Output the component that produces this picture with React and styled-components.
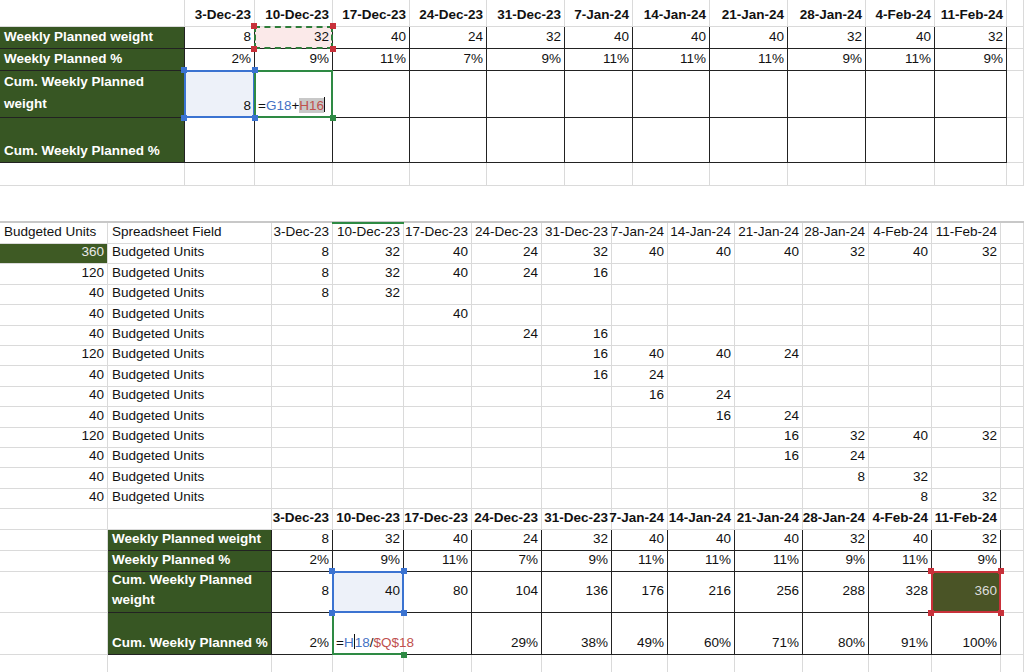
import React from "react";
import styled, { createGlobalStyle } from "styled-components";

const G = createGlobalStyle`
  body { margin: 0; background: #fff; font-family: "Liberation Sans", Arial, sans-serif; }
  #root { width: 1024px; height: 672px; overflow: hidden; }
`;

const Grid = styled.div`
  display: grid;
  grid-template-columns: ${(p) => p.$cols};
  grid-auto-rows: auto;
`;

const Cell = styled.div`
  position: relative;
  box-sizing: border-box;
  height: ${(p) => p.$h}px;
  border-right: 1px solid ${(p) => (p.$b ? "#222" : "#dadada")};
  border-bottom: 1px solid ${(p) => (p.$b ? "#222" : "#dadada")};
  background: ${(p) => p.$bg || "transparent"};
  color: ${(p) => p.$fg || "#111"};
  font-size: 13.5px;
  font-weight: ${(p) => (p.$bold ? 700 : 400)};
  display: flex;
  align-items: ${(p) => (p.$top ? "center" : "flex-end")};
  justify-content: ${(p) => (p.$left ? "flex-start" : "flex-end")};
  padding: 0 3px 2px 4px;
  line-height: 18px;
  white-space: nowrap;
  overflow: visible;
`;

const Label = styled.span`
  text-align: left;
  line-height: ${(p) => p.$lh || 22}px;
  white-space: pre-wrap;
`;

const Sel = styled.div`
  position: absolute;
  inset: -1px;
  border: 2px ${(p) => p.$style || "solid"} ${(p) => p.$c};
  pointer-events: none;
  z-index: 2;
`;
const Handle = styled.div`
  position: absolute;
  width: 6px;
  height: 6px;
  background: ${(p) => p.$c};
  z-index: 3;
  ${(p) => p.$pos}
`;
const Formula = styled.span`
  position: absolute;
  left: 3px;
  bottom: 2px;
  z-index: 3;
  white-space: nowrap;
`;
const Ref = styled.span`
  color: ${(p) => p.$c};
  background: ${(p) => p.$hl || "transparent"};
`;
const Caret = styled.span`
  display: inline-block;
  width: 1px;
  height: 15px;
  background: #111;
  vertical-align: -2px;
`;
const Spacer = styled.div`
  height: 35px;
  border-bottom: 2px solid #c8c8c8;
`;

const corners = (c) => (
  <>
    <Handle $c={c} $pos="left:-4px;top:-4px;" />
    <Handle $c={c} $pos="right:-4px;top:-4px;" />
    <Handle $c={c} $pos="left:-4px;bottom:-4px;" />
    <Handle $c={c} $pos="right:-4px;bottom:-4px;" />
  </>
);

const dates = ["3-Dec-23","10-Dec-23","17-Dec-23","24-Dec-23","31-Dec-23","7-Jan-24","14-Jan-24","21-Jan-24","28-Jan-24","4-Feb-24","11-Feb-24"];
const weekly = [8,32,40,24,32,40,40,40,32,40,32];
const pct = ["2%","9%","11%","7%","9%","11%","11%","11%","9%","11%","9%"];
const cum = [8,40,80,104,136,176,216,256,288,328,360];
const cumPct = ["2%","","","29%","38%","49%","60%","71%","80%","91%","100%"];
const GREEN = "#375623";

const topCols = "185px 70px 78px 77px 77px 78px 68px 77px 78px 78px 69px 72px 1fr";
const botCols = "108px 164px 61px 71px 68px 70px 70px 56px 67px 68px 66px 63px 69px 1fr";

const midRows = [
  [360, [8,32,40,24,32,40,40,40,32,40,32]],
  [120, [8,32,40,24,16]],
  [40, [8,32]],
  [40, [, ,40]],
  [40, [, , ,24,16]],
  [120, [, , , ,16,40,40,24]],
  [40, [, , , ,16,24]],
  [40, [, , , , ,16,24]],
  [40, [, , , , , ,16,24]],
  [120, [, , , , , , ,16,32,40,32]],
  [40, [, , , , , , ,16,24]],
  [40, [, , , , , , , ,8,32]],
  [40, [, , , , , , , , ,8,32]],
];

function Top() {
  const H = [27, 22, 22, 47, 45, 23];
  return (
    <Grid $cols={topCols}>
      <Cell $h={H[0]} />
      {dates.map((d) => <Cell key={d} $h={H[0]} $bold>{d}</Cell>)}
      <Cell $h={H[0]} />

      <Cell $h={H[1]} $b $bg={GREEN} $fg="#fff" $bold $left>Weekly Planned weight</Cell>
      {weekly.map((v, i) => (
        <Cell key={i} $h={H[1]} $b $bg={i === 1 ? "#fbe9e9" : undefined}>
          {v}
          {i === 1 && (<><Sel $c="#2e7d3a" $style="dashed" />{corners("#c8313a")}</>)}
        </Cell>
      ))}
      <Cell $h={H[1]} />

      <Cell $h={H[2]} $b $bg={GREEN} $fg="#fff" $bold $left>Weekly Planned %</Cell>
      {pct.map((v, i) => <Cell key={i} $h={H[2]} $b>{v}</Cell>)}
      <Cell $h={H[2]} />

      <Cell $h={H[3]} $b $bg={GREEN} $fg="#fff" $bold $left><Label>{"Cum. Weekly Planned\nweight"}</Label></Cell>
      {weekly.map((_, i) => (
        <Cell key={i} $h={H[3]} $b $bg={i === 0 ? "#edf1f9" : undefined}>
          {i === 0 && (<>8<Sel $c="#3b73d1" />{corners("#3b73d1")}</>)}
          {i === 1 && (
            <>
              <Sel $c="#2e8a44" />
              <Handle $c="#2e8a44" $pos="right:-4px;bottom:-4px;" />
              <Formula>=<Ref $c="#4472c4">G18</Ref>+<Ref $c="#c0504d" $hl="#c8c8c8">H16</Ref><Caret /></Formula>
            </>
          )}
        </Cell>
      ))}
      <Cell $h={H[3]} />

      <Cell $h={H[4]} $b $bg={GREEN} $fg="#fff" $bold $left>Cum. Weekly Planned %</Cell>
      {weekly.map((_, i) => <Cell key={i} $h={H[4]} $b />)}
      <Cell $h={H[4]} />

      {Array.from({ length: 13 }).map((_, i) => <Cell key={i} $h={H[5]} />)}
    </Grid>
  );
}

function Middle() {
  return (
    <Grid $cols={botCols}>
      <Cell $h={21} $left>Budgeted Units</Cell>
      <Cell $h={21} $left>Spreadsheet Field</Cell>
      {dates.map((d, i) => (
        <Cell key={d} $h={21}>
          {d}
          {i === 1 && <Sel $c="#2e8a44" style={{ border: "none", borderTop: "2px solid #2e8a44" }} />}
        </Cell>
      ))}
      <Cell $h={21} />
      {midRows.map(([u, vals], r) => (
        <React.Fragment key={r}>
          <Cell $h={20.4} $bg={r === 0 ? "#3e5a24" : undefined} $fg={r === 0 ? "#e8e8e8" : undefined}>{u}</Cell>
          <Cell $h={20.4} $left>Budgeted Units</Cell>
          {dates.map((_, i) => <Cell key={i} $h={20.4}>{vals[i] ?? ""}</Cell>)}
          <Cell $h={20.4} />
        </React.Fragment>
      ))}
    </Grid>
  );
}

function Bottom() {
  return (
    <Grid $cols={botCols}>
      <Cell $h={21} />
      <Cell $h={21} />
      {dates.map((d) => <Cell key={d} $h={21} $bold>{d}</Cell>)}
      <Cell $h={21} />

      <Cell $h={21} />
      <Cell $h={21} $b $bg={GREEN} $fg="#fff" $bold $left>Weekly Planned weight</Cell>
      {weekly.map((v, i) => <Cell key={i} $h={21} $b>{v}</Cell>)}
      <Cell $h={21} />

      <Cell $h={21} />
      <Cell $h={21} $b $bg={GREEN} $fg="#fff" $bold $left>Weekly Planned %</Cell>
      {pct.map((v, i) => <Cell key={i} $h={21} $b>{v}</Cell>)}
      <Cell $h={21} />

      <Cell $h={41} />
      <Cell $h={41} $b $bg={GREEN} $fg="#fff" $bold $left><Label $lh={20}>{"Cum. Weekly Planned\nweight"}</Label></Cell>
      {cum.map((v, i) => (
        <Cell key={i} $h={41} $b $top $bg={i === 1 ? "#edf1f9" : i === 10 ? "#4a5426" : undefined} $fg={i === 10 ? "#ddd" : undefined}>
          {v}
          {i === 1 && (<><Sel $c="#3b73d1" />{corners("#3b73d1")}</>)}
          {i === 10 && (<><Sel $c="#c8313a" />{corners("#c8313a")}</>)}
        </Cell>
      ))}
      <Cell $h={41} />

      <Cell $h={42} />
      <Cell $h={42} $b $bg={GREEN} $fg="#fff" $bold $left>Cum. Weekly Planned %</Cell>
      {cumPct.map((v, i) => (
        <Cell key={i} $h={42} $b={i !== 1 && i !== 2} style={i === 1 ? { borderBottom: "1px solid #222" } : i === 2 ? { borderBottom: "1px solid #222", borderRight: "1px solid #222" } : undefined}>
          {v}
          {i === 1 && (
            <>
              <Sel $c="#2e8a44" style={{ borderTop: "none", borderRight: "none" }} />
              <Handle $c="#2e8a44" $pos="right:-4px;bottom:-4px;" />
              <Formula>=<Ref $c="#4472c4">H<Caret />18</Ref>/<Ref $c="#c0504d">$Q$18</Ref></Formula>
            </>
          )}
        </Cell>
      ))}
      <Cell $h={42} />

      {Array.from({ length: 14 }).map((_, i) => <Cell key={i} $h={22} />)}
    </Grid>
  );
}

export default function App() {
  return (
    <>
      <G />
      <Top />
      <Spacer />
      <Middle />
      <Bottom />
    </>
  );
}
